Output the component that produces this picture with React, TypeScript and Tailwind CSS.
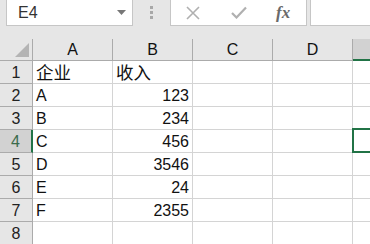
import React from 'react';

const cols = ['A', 'B', 'C', 'D'];
const rows: [string, string][] = [
  ['企业', '收入'],
  ['A', '123'],
  ['B', '234'],
  ['C', '456'],
  ['D', '3546'],
  ['E', '24'],
  ['F', '2355'],
  ['', ''],
];

const font = { fontFamily: '"Liberation Sans", "Noto Sans CJK SC", sans-serif' };

export default function App() {
  return (
    <div className="w-[370px] h-[244px] overflow-hidden bg-[#e6e6e6] text-[16px] leading-[20px] text-[#111]" style={font}>
      {/* Formula bar */}
      <div className="flex h-[26px] items-stretch">
        <div className="ml-[6px] w-[127px] -mt-px bg-white border border-[#c6c6c6] flex items-center justify-between pl-[11px] pr-[6px]">
          <span className="text-[#333] text-[16px]">E4</span>
          <svg width="9" height="5" viewBox="0 0 9 5"><path d="M0 0 L9 0 L4.5 5 Z" fill="#777" /></svg>
        </div>
        <div className="w-[37px] flex flex-col items-center justify-center gap-[2px] pb-[2px]">
          <span className="w-[3px] h-[3px] bg-[#a8a8a8]" />
          <span className="w-[3px] h-[3px] bg-[#a8a8a8]" />
          <span className="w-[3px] h-[3px] bg-[#a8a8a8]" />
        </div>
        <div className="w-[137px] -mt-px bg-white border border-[#c6c6c6] flex items-center">
          <svg className="ml-[15px]" width="14" height="14" viewBox="0 0 14 14">
            <path d="M1 1 L13 13 M13 1 L1 13" stroke="#b0b0b0" strokeWidth="1.6" />
          </svg>
          <svg className="ml-[31px]" width="16" height="13" viewBox="0 0 16 13">
            <path d="M1 7 L5.5 11.5 L15 1.5" stroke="#b0b0b0" strokeWidth="2.2" fill="none" />
          </svg>
          <span className="ml-[29px] italic text-[#6a6a6a] text-[17px] font-bold" style={{ fontFamily: '"Liberation Serif", serif' }}>
            fx
          </span>
        </div>
        <div className="ml-[3px] flex-1 -mt-px bg-white border border-r-0 border-[#c6c6c6]" />
      </div>

      {/* Grid */}
      <div className="mt-[13px] grid grid-cols-[33px_80px_80px_80px_80px_1fr] grid-rows-[22px_repeat(8,23px)] relative">
        {/* corner */}
        <div className="border-r border-b border-[#ababab] relative">
          <svg className="absolute right-[3px] bottom-[3px]" width="14" height="14" viewBox="0 0 14 14">
            <path d="M14 0 L14 14 L0 14 Z" fill="#b4b4b4" />
          </svg>
        </div>
        {cols.map((c) => (
          <div key={c} className="border-r border-b border-[#ababab] flex items-end justify-center">
            {c}
          </div>
        ))}
        <div className="bg-[#d2d2d2] border-b-2 border-[#217346]" />

        {rows.map((r, i) => {
          const sel = i === 3;
          const cjk = i === 0 ? 'text-[17.5px]' : '';
          return (
            <React.Fragment key={i}>
              <div
                className={`flex items-end justify-center border-b border-[#ababab] ${
                  sel ? 'bg-[#d2d2d2] border-r-2 border-r-[#217346] text-[#3a6b4c]' : 'border-r border-r-[#ababab] text-[#222]'
                }`}
              >
                {i + 1}
              </div>
              <div className={`bg-white border-r border-b border-[#d4d4d4] flex items-end pl-[3px] ${cjk}`}>{r[0]}</div>
              <div
                className={`bg-white border-r border-b border-[#d4d4d4] flex items-end ${
                  i === 0 ? 'pl-[3px]' : 'justify-end pr-[3px]'
                } ${cjk}`}
              >
                {r[1]}
              </div>
              <div className="bg-white border-r border-b border-[#d4d4d4]" />
              <div className="bg-white border-r border-b border-[#d4d4d4]" />
              <div className="bg-white border-b border-[#d4d4d4] relative">
                {sel && <div className="absolute -left-px -top-[2px] -right-2 -bottom-px border-2 border-[#217346]" />}
              </div>
            </React.Fragment>
          );
        })}
      </div>
    </div>
  );
}
